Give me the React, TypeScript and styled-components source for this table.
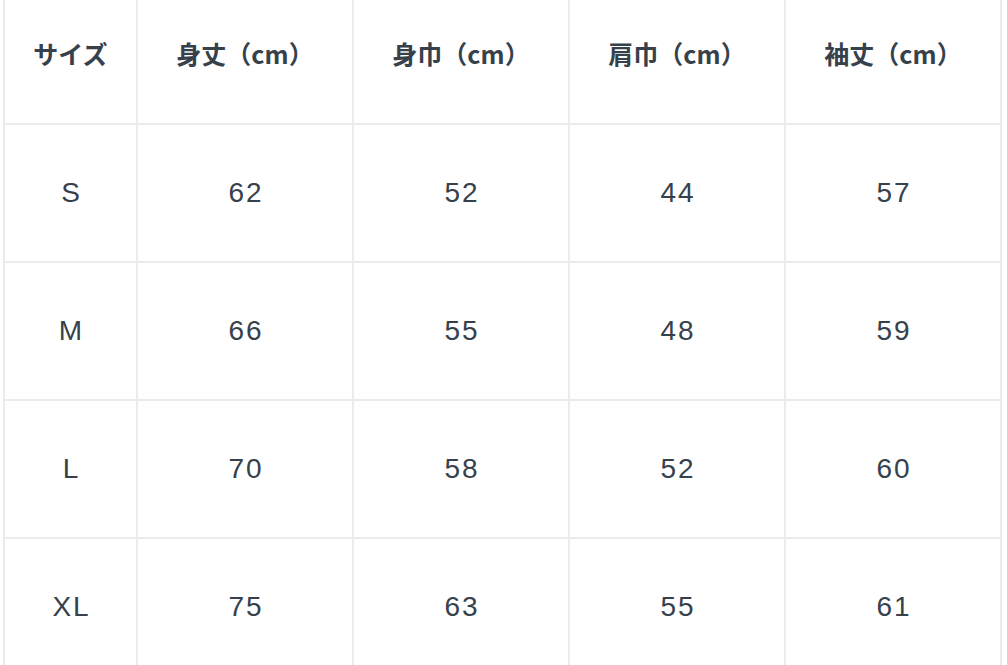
import React from "react";
import styled, { createGlobalStyle } from "styled-components";

const Global = createGlobalStyle`
  html, body { margin: 0; padding: 0; background: #ffffff; overflow: hidden; }
  body { font-family: "Liberation Sans", "Noto Sans CJK JP", sans-serif; color: #36414b; }
`;

const Page = styled.div`
  padding-left: 3px;
  margin-top: -15px;
`;

const Table = styled.table`
  border-collapse: collapse;
  table-layout: fixed;
  width: 997px;
`;

const Col = styled.col<{ $w: number }>`
  width: ${(p) => p.$w}px;
`;

const Th = styled.th`
  height: 132px;
  border: 2px solid #ebebeb;
  padding: 0 0 4px 0;
  text-align: center;
  vertical-align: middle;
  font-family: "Noto Sans CJK JP", "Liberation Sans", sans-serif;
  font-weight: 700;
  font-size: 25px;
  color: #36414b;
`;

const Td = styled.td`
  height: 136px;
  border: 2px solid #ebebeb;
  padding: 0 0 0 2px;
  text-align: center;
  vertical-align: middle;
  font-family: "Liberation Sans", sans-serif;
  font-size: 28px;
  letter-spacing: 2px;
  color: #36414b;
`;

const headers = ["サイズ", "身丈（cm）", "身巾（cm）", "肩巾（cm）", "袖丈（cm）"];
const rows = [
  ["S", "62", "52", "44", "57"],
  ["M", "66", "55", "48", "59"],
  ["L", "70", "58", "52", "60"],
  ["XL", "75", "63", "55", "61"],
];

export default function App() {
  return (
    <>
      <Global />
      <Page>
        <Table>
          <colgroup>
            <Col $w={133} />
            <Col $w={216} />
            <Col $w={216} />
            <Col $w={216} />
            <Col $w={216} />
          </colgroup>
          <thead>
            <tr>
              {headers.map((h) => (
                <Th key={h}>{h}</Th>
              ))}
            </tr>
          </thead>
          <tbody>
            {rows.map((r) => (
              <tr key={r[0]}>
                {r.map((c, i) => (
                  <Td key={i}>{c}</Td>
                ))}
              </tr>
            ))}
          </tbody>
        </Table>
      </Page>
    </>
  );
}
